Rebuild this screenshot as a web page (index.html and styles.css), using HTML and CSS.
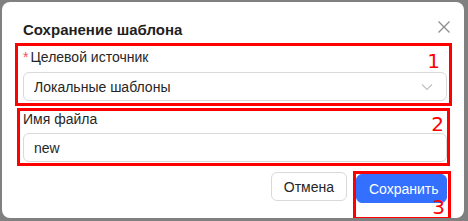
FILE: index.html
```html
<!DOCTYPE html>
<html lang="ru">
  <head>
    <meta charset="UTF-8" />
    <meta name="viewport" content="width=device-width, initial-scale=1.0" />
    <title>Сохранение шаблона</title>
    <link rel="stylesheet" href="styles.css">
  </head>
  <body>
    <div class="modal">
      <h3 class="modal-title">Сохранение шаблона</h3>
      <button type="button" class="close" aria-label="Закрыть">
        <svg width="12" height="12" viewBox="0 0 12 12">
          <path d="M0.5 0.5 L11.5 11.5 M11.5 0.5 L0.5 11.5" stroke="#8c8c8c" stroke-width="1.3" fill="none" />
        </svg>
      </button>

      <form name="form" onsubmit="return false">
        <!-- Target source -->
        <div class="mark mark-one">
          <label class="label"><span class="req">*</span>Целевой источник</label>
          <div class="select">
            <span>Локальные шаблоны</span>
            <svg width="12" height="8" viewBox="0 0 12 8">
              <path d="M1 1.5 L6 6.5 L11 1.5" stroke="#bfbfbf" stroke-width="1.1" fill="none" />
            </svg>
          </div>
          <span class="num">1</span>
        </div>

        <!-- File name -->
        <div class="mark mark-two">
          <label class="label">Имя файла</label>
          <input type="text" class="input" value="new" />
          <span class="num">2</span>
        </div>

        <div class="footer">
          <button type="button" class="btn">Отмена</button>
          <div class="mark mark-three">
            <button type="button" class="btn primary">Сохранить</button>
            <span class="num">3</span>
          </div>
        </div>
      </form>
    </div>
  </body>
</html>
```

FILE: styles.css
```css
/* Page behind the dialog */
body {
  margin: 0;
  background-color: #808080;
  font-family: "Liberation Sans", Arial, sans-serif;
  color: #262626;
}

/* Dialog box */
.modal {
  position: relative;
  width: 462px;
  height: 216px;
  margin: 2px 0 0 2px;
  padding-top: 18px;
  box-sizing: border-box;
  background-color: #fff;
  border-radius: 8px;
  overflow: hidden;
}

.modal-title {
  margin: 0 0 3px 21px;
  font-size: 15px;
  line-height: 20px;
  font-weight: bold;
  color: #1f1f1f;
}

.close {
  position: absolute;
  top: 19px;
  right: 14px;
  padding: 0;
  border: none;
  background: none;
  line-height: 0;
}

/* Red annotation frames */
.mark {
  position: relative;
  border: 3px solid #ff0000;
  box-sizing: border-box;
}

.num {
  position: absolute;
  right: 9px;
  font-family: "DejaVu Sans", sans-serif;
  font-size: 20px;
  line-height: 20px;
  color: #ff0000;
}

.mark-one {
  width: 437px;
  margin-left: 13px;
  padding: 0 2px 2px 5px;
}

.mark-one .num {
  top: 5px;
}

.mark-two {
  width: 433px;
  margin: 2px 0 0 15px;
  padding: 0 0 1px 3px;
}

.mark-two .num {
  top: 3px;
  right: 3px;
}

.mark-three {
  width: 98px;
  height: 49px;
  padding-left: 0;
}

.mark-three .num {
  top: 23px;
  right: 3px;
}

/* Form fields */
.label {
  display: block;
  font-size: 14px;
  line-height: 22px;
}

.mark-two .label {
  line-height: 16px;
  margin-bottom: 6px;
}

.req {
  color: #ff4d4f;
  margin-right: 2px;
}

.select,
.input {
  display: flex;
  align-items: center;
  justify-content: space-between;
  width: 424px;
  height: 29px;
  margin-top: 4px;
  padding: 0 13px 0 10px;
  box-sizing: border-box;
  border: 1px solid #d9d9d9;
  border-radius: 6px;
  font-family: inherit;
  font-size: 14px;
  color: #262626;
}

.mark-two .input {
  margin-top: 0;
  outline: none;
}

/* Buttons */
.footer {
  display: flex;
  justify-content: flex-end;
  align-items: flex-start;
  gap: 6px;
  margin: 5px 13px 0 0;
}

.btn {
  height: 29px;
  padding: 0 12px;
  margin-top: 1px;
  font-family: inherit;
  font-size: 14px;
  color: #262626;
  background-color: #fff;
  border: 1px solid #d9d9d9;
  border-radius: 6px;
}

.primary {
  width: 91px;
  margin-top: 0;
  color: #fff;
  background-color: #3370ff;
  border-color: #3370ff;
}
```
